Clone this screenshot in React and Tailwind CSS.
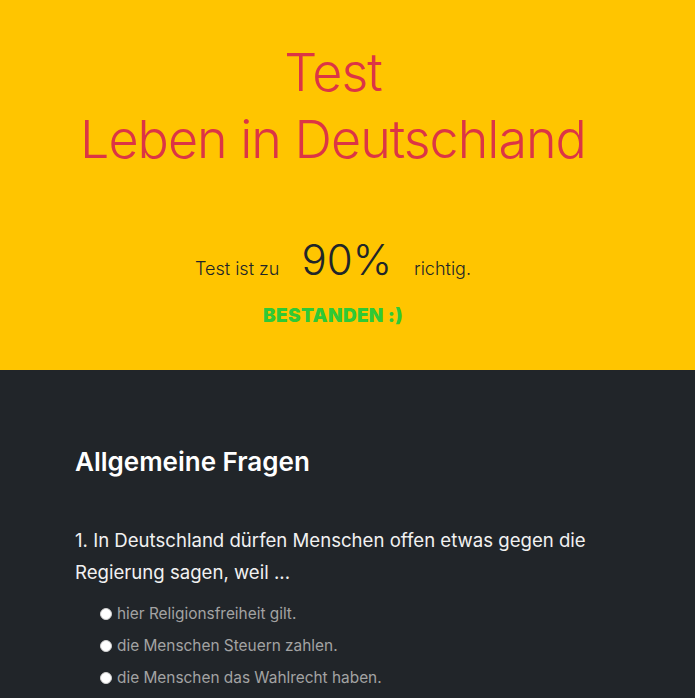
import React from 'react';

const options = [
  'hier Religionsfreiheit gilt.',
  'die Menschen Steuern zahlen.',
  'die Menschen das Wahlrecht haben.',
];

export default function App() {
  return (
    <div className="min-h-screen bg-[#212529] font-['Inter',sans-serif]">
      <header className="bg-[#ffc500] h-[370px] pt-[39px]">
        <div className="w-[666px] text-center">
          <h1 className="text-[52px] leading-[67px] font-light text-[#dc3545] tracking-[-1px]">
            Test
            <br />
            Leben in Deutschland
          </h1>
          <div className="mt-[62px] flex items-baseline justify-center text-[#212529]">
            <span className="text-[18px] font-light">Test ist zu</span>
            <span className="text-[42px] font-light mx-[22px] leading-[50px]">90%</span>
            <span className="text-[18px] font-light">richtig.</span>
          </div>
          <p className="mt-[17px] text-[19px] leading-[27px] font-black text-[#2fc936] tracking-[0.3px]">
            BESTANDEN :)
          </p>
        </div>
      </header>

      <main className="px-[75px] pt-[76px] pb-10">
        <h2 className="text-[26px] leading-[32px] font-semibold text-white">Allgemeine Fragen</h2>
        <p className="mt-[46px] text-[18.6px] leading-[32px] text-[#f1f1f1] max-w-[545px]">
          1. In Deutschland dürfen Menschen offen etwas gegen die Regierung sagen, weil ...
        </p>
        <ul className="mt-[10px] pl-[25px]">
          {options.map((opt) => (
            <li key={opt} className="flex items-center h-[32px] text-[15.4px] text-[#a3a3a3]">
              <span className="w-[12px] h-[12px] rounded-full bg-white border border-[#cfcfcf] mr-[5px]" />
              {opt}
            </li>
          ))}
        </ul>
      </main>
    </div>
  );
}
